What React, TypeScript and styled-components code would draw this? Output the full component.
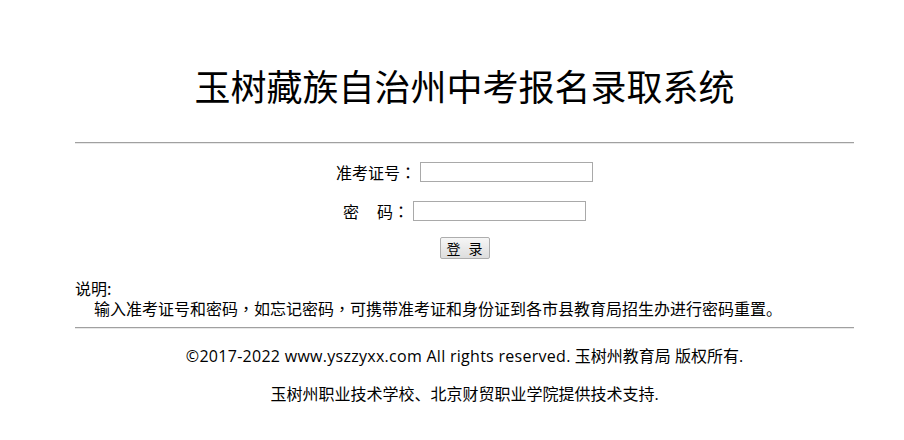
import React from "react";
import styled, { createGlobalStyle } from "styled-components";

const Global = createGlobalStyle`
  html, body { margin: 0; padding: 0; background: #fff; }
  body {
    font-family: "Noto Sans CJK SC", "Noto Sans", sans-serif;
    color: #000;
  }
`;

const Page = styled.div`
  padding-left: 25px;
`;

const Container = styled.div`
  width: 779px;
  margin: 0 auto;
`;

const Title = styled.h1`
  margin: 0;
  padding-top: 67px;
  height: 36px;
  line-height: 36px;
  font-size: 36px;
  font-weight: normal;
  text-align: center;
  font-family: "Noto Sans CJK SC", sans-serif;
`;

const Rule = styled.div<{ $top: number }>`
  margin-top: ${(p) => p.$top}px;
  height: 0;
  border-top: 1px solid #a0a0a0;
  border-bottom: 1px solid #e8e8e8;
`;

const Punct = styled.span`
  font-family: "Noto Sans CJK TC", sans-serif;
`;

const Form = styled.form`
  display: flex;
  flex-direction: column;
  align-items: center;
  padding-top: 18px;
`;

const Row = styled.div<{ $mt?: number }>`
  display: flex;
  align-items: center;
  height: 20px;
  margin-top: ${(p) => p.$mt ?? 0}px;
  font-size: 16px;
  line-height: 20px;
`;

const Label = styled.label`
  display: inline-flex;
  align-items: center;
  white-space: pre;
  margin-right: 4px;
`;

const Gap = styled.span`
  display: inline-block;
  width: 18px;
`;

const Input = styled.input`
  box-sizing: border-box;
  width: 173px;
  height: 20px;
  border: 1px solid #a9a9a9;
  padding: 0 2px;
  margin: 0;
  font-size: 13px;
  outline: none;
  background: #fff;
`;

const Button = styled.button`
  box-sizing: border-box;
  width: 50px;
  height: 22px;
  margin-top: 16px;
  padding: 0;
  border: 1px solid #adadad;
  border-radius: 2px;
  background: linear-gradient(#f6f6f6, #dddddd);
  font-family: "Noto Sans CJK SC", sans-serif;
  font-size: 14px;
  line-height: 20px;
  color: #000;
  word-spacing: 5px;
`;

const Notes = styled.div`
  margin-top: 19px;
  font-size: 16px;
  line-height: 20px;
`;

const NoteTitle = styled.div``;

const NoteBody = styled.div`
  padding-left: 19px;
`;

const Footer = styled.div`
  text-align: center;
  padding-top: 17px;
`;

const FooterLine = styled.p<{ $mt: number }>`
  margin: ${(p) => p.$mt}px 0 0;
  font-size: 16px;
  line-height: 20px;
  font-family: "Open Sans", "Noto Sans CJK SC", sans-serif;
`;

const Latin = styled.span`
  letter-spacing: 0.28px;
`;

export default function App() {
  return (
    <>
      <Global />
      <Page>
        <Container>
          <Title>玉树藏族自治州中考报名录取系统</Title>
          <Rule $top={39} />
          <Form onSubmit={(e) => e.preventDefault()}>
            <Row>
              <Label>
                准考证号<Punct>：</Punct>
              </Label>
              <Input type="text" />
            </Row>
            <Row $mt={19}>
              <Label>
                密<Gap />码<Punct>：</Punct>
              </Label>
              <Input type="password" />
            </Row>
            <Button type="submit">登 录</Button>
          </Form>
          <Notes>
            <NoteTitle>说明:</NoteTitle>
            <NoteBody>
              输入准考证号和密码<Punct>，</Punct>如忘记密码<Punct>，</Punct>
              可携带准考证和身份证到各市县教育局招生办进行密码重置。
            </NoteBody>
          </Notes>
          <Rule $top={9} />
          <Footer>
            <FooterLine $mt={0}>
              <Latin>©2017-2022 www.yszzyxx.com All rights reserved.</Latin> 玉树州教育局 版权所有.
            </FooterLine>
            <FooterLine $mt={18}>
              玉树州职业技术学校、北京财贸职业学院提供技术支持.
            </FooterLine>
          </Footer>
        </Container>
      </Page>
    </>
  );
}
